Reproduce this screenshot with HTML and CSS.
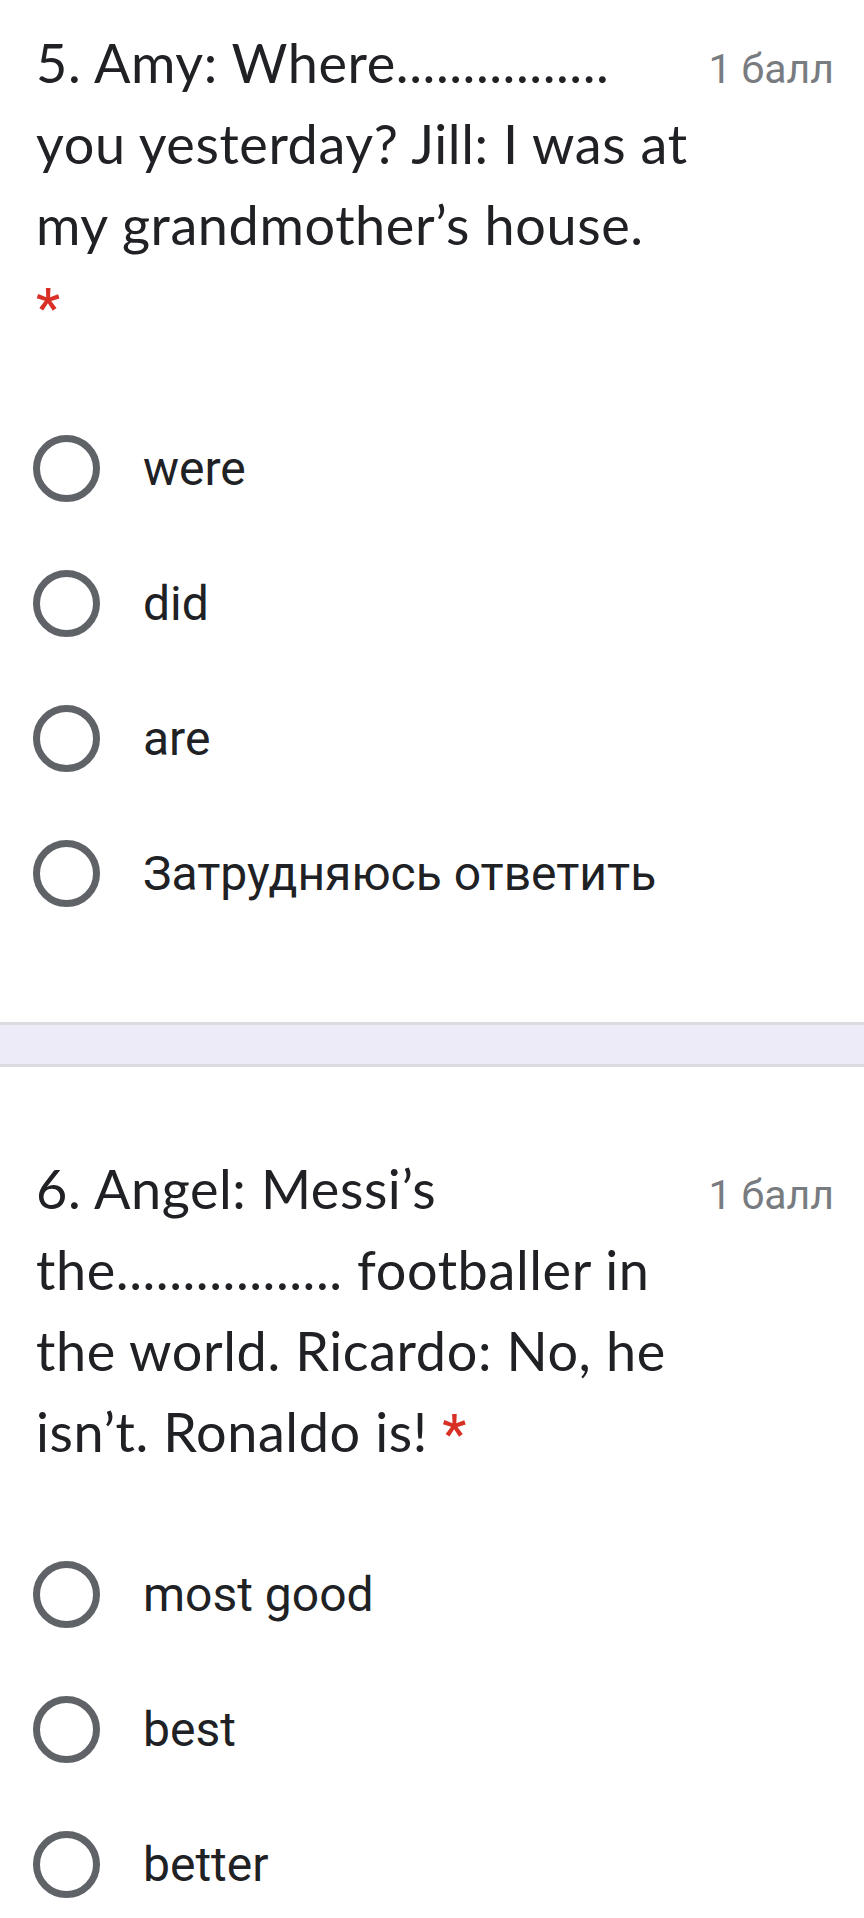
FILE: index.html
```html
<!DOCTYPE html>
<html lang="ru">
<head>
<meta charset="utf-8">
<title>Форма</title>
<link rel="stylesheet" href="styles.css">
</head>
<body>
<div class="question q5">
  <div class="q-head">
    <div class="q-title">5. Amy: Where................<br>you yesterday? Jill: I was at<br>my grandmother’s house.<br><span class="req">*</span></div>
    <div class="q-points">1 балл</div>
  </div>
  <div class="options">
    <div class="option"><span class="radio"></span><span class="opt-label">were</span></div>
    <div class="option"><span class="radio"></span><span class="opt-label">did</span></div>
    <div class="option"><span class="radio"></span><span class="opt-label">are</span></div>
    <div class="option"><span class="radio"></span><span class="opt-label">Затрудняюсь ответить</span></div>
  </div>
</div>
<div class="separator"></div>
<div class="question q6">
  <div class="q-head">
    <div class="q-title">6. Angel: Messi’s<br>the................. footballer in<br>the world. Ricardo: No, he<br>isn’t. Ronaldo is! <span class="req">*</span></div>
    <div class="q-points">1 балл</div>
  </div>
  <div class="options">
    <div class="option"><span class="radio"></span><span class="opt-label">most good</span></div>
    <div class="option"><span class="radio"></span><span class="opt-label">best</span></div>
    <div class="option"><span class="radio"></span><span class="opt-label">better</span></div>
  </div>
</div>
</body>
</html>
```
FILE: styles.css
```css
html, body {
  margin: 0;
  padding: 0;
  background: #ffffff;
}
body {
  width: 864px;
  overflow: hidden;
}
.question {
  padding: 0 30px 0 33px;
}
.q5 {
  padding-top: 22px;
  padding-bottom: 81px;
}
.q6 {
  padding-top: 81px;
}
.q-head {
  display: flex;
  align-items: baseline;
  justify-content: space-between;
  gap: 20px;
}
.q-title {
  flex: 1;
  min-width: 0;
  white-space: nowrap;
  font-family: "Lato", "Open Sans", sans-serif;
  font-size: 54px;
  line-height: 81px;
  letter-spacing: 0.6px;
  color: #202124;
  padding-left: 3px;
}
.req {
  color: #d93025;
  font-family: "Roboto", sans-serif;
  font-weight: 500;
  line-height: 0;
}
.q-points {
  flex: none;
  font-family: "Roboto", sans-serif;
  font-size: 41px;
  line-height: 81px;
  color: #787c80;
}
.options {
  display: flex;
  flex-direction: column;
  padding-top: 55px;
}
.option {
  display: flex;
  align-items: center;
  height: 135px;
  gap: 43px;
}
.radio {
  flex: none;
  box-sizing: border-box;
  width: 67px;
  height: 67px;
  border: 7px solid #5f6368;
  border-radius: 50%;
}
.opt-label {
  font-family: "Roboto", sans-serif;
  font-size: 48px;
  color: #202124;
}
.separator {
  height: 39px;
  background: #eeebf8;
  border-top: 3px solid #dadce0;
  border-bottom: 3px solid #dadce0;
}
```
